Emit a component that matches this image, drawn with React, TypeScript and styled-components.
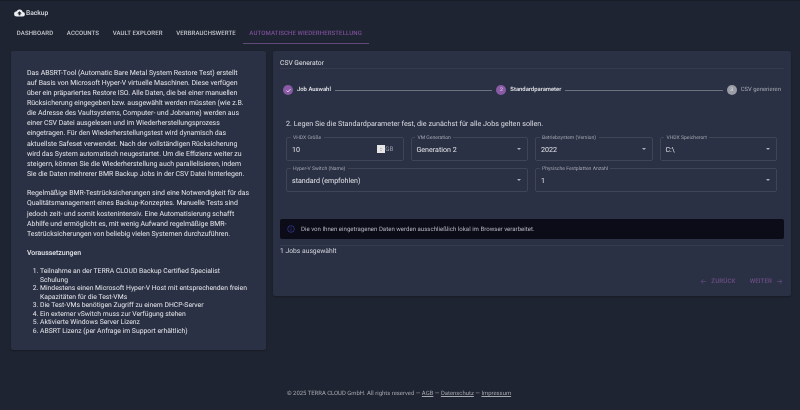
import React from "react";
import styled, { createGlobalStyle } from "styled-components";

const Global = createGlobalStyle`
  html, body { margin: 0; padding: 0; background: #1e2431; }
  body { font-family: Roboto, "Liberation Sans", sans-serif; color: #e4e5ea; text-rendering: geometricPrecision; }
  * { box-sizing: border-box; }
`;
const Page = styled.div`
  width: 800px; height: 410px; display: flex; flex-direction: column; overflow: hidden; background: #1e2431; filter: blur(0.3px);
`;
const AppBar = styled.header`
  flex: none; height: 24px; display: flex; align-items: center; gap: 1.5px; padding: 0 13.5px; font-size: 6.7px; font-weight: 500; color: #d8dae0;
  border-top: 1px solid #181d28;
`;
const Tabs = styled.nav`
  flex: none; display: flex; height: 20px; padding-left: 10px;
`;
const Tab = styled.div<{ $active?: boolean }>`
  padding: 0 6.8px; display: flex; align-items: center; font-size: 6.05px; font-weight: 500; letter-spacing: 0.1px; text-transform: uppercase;
  color: ${(p) => (p.$active ? "#7d4f99" : "#c6c8cf")};
  border-bottom: 1px solid ${(p) => (p.$active ? "#5f4a78" : "transparent")};
`;
const Main = styled.main`
  flex: none; display: grid; grid-template-columns: 255px 518px; gap: 7px; padding: 7px 0 0 11px; align-items: start;
`;
const InfoCard = styled.section`
  height: 299px; background: #2b3144; border-radius: 2px; padding: 16.5px 16px 0; font-size: 6.95px; line-height: 10.15px; color: #e4e5ea;
  box-shadow: 0 1px 2px rgba(0,0,0,.25);
`;
const Para = styled.p`
  margin: 0 0 9px; white-space: pre-line;
`;
const Heading = styled.div`
  font-weight: 500; margin: 0 0 9px;
`;
const Ol = styled.ol`
  margin: 0; padding: 0 1.5px 0 13px; font-size: 6.8px; line-height: 8.5px;
`;
const CsvCard = styled.section`
  height: 245px; background: #2b3144; border-radius: 2px; padding: 0 7px; display: flex; flex-direction: column;
  box-shadow: 0 1px 2px rgba(0,0,0,.25);
`;
const CardTitle = styled.div`
  flex: none; height: 18px; padding-top: 7px; line-height: 10px; border-bottom: 1px solid #353b4e; font-size: 6.75px; color: #e0e1e6;
`;
const Stepper = styled.div`
  flex: none; display: flex; align-items: center; height: 42px; padding: 0 3px; gap: 4px;
`;
const StepCircle = styled.span<{ $muted?: boolean }>`
  width: 10px; height: 10px; border-radius: 50%; background: ${(p) => (p.$muted ? "#9a9ca6" : "#8a5aa6")}; color: #e8e6ee;
  display: inline-flex; align-items: center; justify-content: center; font-size: 5px; flex: none;
`;
const StepLabel = styled.span<{ $muted?: boolean }>`
  font-size: 5.9px; font-weight: ${(p) => (p.$muted ? 400 : 500)}; color: ${(p) => (p.$muted ? "#a6a8b2" : "#e8e9ee")}; white-space: nowrap;
`;
const StepLine = styled.span`
  flex: 1; height: 1px; background: #6d717e;
`;
const Lead = styled.div`
  flex: none; font-size: 7.2px; color: #dcdde3; margin: 8px 0 0 6px; line-height: 10px;
`;
const Fields = styled.div`
  flex: none; display: grid; grid-template-columns: repeat(4, 117.5px); gap: 7px; margin: 8px 0 0 6px;
`;
const Field = styled.div<{ $wide?: boolean }>`
  position: relative; height: 24px; border: 1px solid #3f4557; border-radius: 2px; display: flex; align-items: center;
  padding: 0 5px; font-size: 7.1px; color: #e4e5ea; justify-content: space-between;
  ${(p) => (p.$wide ? "grid-column: span 2;" : "")}
`;
const Legend = styled.span`
  position: absolute; top: -3.5px; left: 3.5px; padding: 0 2.5px; background: #2b3144; font-size: 5.05px; line-height: 6px; color: #a4a7b1; white-space: nowrap;
`;
const Caret = styled.span`
  width: 0; height: 0; border-left: 2px solid transparent; border-right: 2px solid transparent; border-top: 2px solid #aeb0b9; margin-right: 1px;
`;
const Suffix = styled.span`
  display: inline-flex; align-items: center; font-size: 6.3px; color: #9a9da8; margin-right: 4px;
`;
const Spin = styled.span`
  width: 8px; height: 8px; background: #e6e6e8; display: inline-flex; flex-direction: column; align-items: center; justify-content: center; gap: 1px;
`;
const SpinTri = styled.span<{ $down?: boolean }>`
  width: 0; height: 0; border-left: 1.5px solid transparent; border-right: 1.5px solid transparent;
  ${(p) => (p.$down ? "border-top: 1.5px solid #999;" : "border-bottom: 1.5px solid #999;")}
`;
const Alert = styled.div`
  flex: none; height: 20px; margin-top: 27px; background: #0b0c17; border-radius: 2px; display: flex; align-items: center; gap: 6px; padding-left: 7px; font-size: 6.08px; color: #b4b6c0;
`;
const Divider = styled.div`
  flex: none; height: 1px; background: #353b4e; margin-top: 6px;
`;
const Count = styled.div`
  flex: none; font-size: 6.75px; color: #d4d6dc; line-height: 10px;
`;
const Actions = styled.div`
  margin-top: auto; display: flex; justify-content: flex-end; gap: 14px; height: 30px; align-items: center; padding-right: 1px;
`;
const NavButton = styled.span`
  display: inline-flex; align-items: center; gap: 4px; font-size: 6.2px; font-weight: 500; color: #6c4c84; letter-spacing: .1px;
`;
const Footer = styled.footer`
  flex: none; margin-top: 40px; padding-left: 287px; font-size: 5.92px; color: #a6a8b0; line-height: 8px;
`;
const FootLink = styled.a`
  color: #a6a8b0; text-decoration: underline;
`;

const Arrow = ({ back }: { back?: boolean }) => (
  <svg width="7" height="7" viewBox="0 0 24 24" fill="none" stroke="#6c4c84" strokeWidth="2.4">
    {back ? <path d="M20 12H5M11 5l-7 7 7 7" /> : <path d="M4 12h15M13 5l7 7-7 7" />}
  </svg>
);

export default function App() {
  return (
    <Page>
      <Global />
      <AppBar>
        <svg width="11" height="8" viewBox="0 0 24 18" fill="#eceef2">
          <path d="M19.4 7A7.5 7.5 0 0 0 5.4 5 6 6 0 0 0 6 17h13a5 5 0 0 0 .4-10zM14 10v4h-4v-4H7l5-5 5 5z" fillRule="evenodd" />
        </svg>
        Backup
      </AppBar>
      <Tabs>
        <Tab>Dashboard</Tab>
        <Tab>Accounts</Tab>
        <Tab>Vault Explorer</Tab>
        <Tab>Verbrauchswerte</Tab>
        <Tab $active>Automatische Wiederherstellung</Tab>
      </Tabs>
      <Main>
        <InfoCard>
          <Para>{`Das ABSRT-Tool (Automatic Bare Metal System Restore Test) erstellt
auf Basis von Microsoft Hyper-V virtuelle Maschinen. Diese verfügen
über ein präpariertes Restore ISO. Alle Daten, die bei einer manuellen
Rücksicherung eingegeben bzw. ausgewählt werden müssten (wie z.B.
die Adresse des Vaultsystems, Computer- und Jobname) werden aus
einer CSV Datei ausgelesen und im Wiederherstellungsprozess
eingetragen. Für den Wiederherstellungstest wird dynamisch das
aktuellste Safeset verwendet. Nach der vollständigen Rücksicherung
wird das System automatisch neugestartet. Um die Effizienz weiter zu
steigern, können Sie die Wiederherstellung auch parallelisieren, indem
Sie die Daten mehrerer BMR Backup Jobs in der CSV Datei hinterlegen.`}</Para>
          <Para>{`Regelmäßige BMR-Testrücksicherungen sind eine Notwendigkeit für das
Qualitätsmanagement eines Backup-Konzeptes. Manuelle Tests sind
jedoch zeit- und somit kostenintensiv. Eine Automatisierung schafft
Abhilfe und ermöglicht es, mit wenig Aufwand regelmäßige BMR-
Testrücksicherungen von beliebig vielen Systemen durchzuführen.`}</Para>
          <Heading>Voraussetzungen</Heading>
          <Ol>
            <li>Teilnahme an der TERRA CLOUD Backup Certified Specialist Schulung</li>
            <li>Mindestens einen Microsoft Hyper-V Host mit entsprechenden freien Kapazitäten für die Test-VMs</li>
            <li>Die Test-VMs benötigen Zugriff zu einem DHCP-Server</li>
            <li>Ein externer vSwitch muss zur Verfügung stehen</li>
            <li>Aktivierte Windows Server Lizenz</li>
            <li>ABSRT Lizenz (per Anfrage im Support erhältlich)</li>
          </Ol>
        </InfoCard>
        <CsvCard>
          <CardTitle>CSV Generator</CardTitle>
          <Stepper>
            <StepCircle>
              <svg width="7" height="7" viewBox="0 0 24 24" fill="none" stroke="#e8e6ee" strokeWidth="3"><path d="M5 12l5 5 9-10" /></svg>
            </StepCircle>
            <StepLabel>Job Auswahl</StepLabel>
            <StepLine />
            <StepCircle>2</StepCircle>
            <StepLabel>Standardparameter</StepLabel>
            <StepLine />
            <StepCircle $muted>3</StepCircle>
            <StepLabel $muted>CSV generieren</StepLabel>
          </Stepper>
          <Lead>2. Legen Sie die Standardparameter fest, die zunächst für alle Jobs gelten sollen.</Lead>
          <Fields>
            <Field><Legend>VHDX Größe</Legend>10<Suffix><Spin><SpinTri /><SpinTri $down /></Spin>GB</Suffix></Field>
            <Field><Legend>VM Generation</Legend>Generation 2<Caret /></Field>
            <Field><Legend>Betriebsystem (Version)</Legend>2022<Caret /></Field>
            <Field><Legend>VHDX Speicherort</Legend>C:\<Caret /></Field>
            <Field $wide><Legend>Hyper-V Switch (Name)</Legend>standard (empfohlen)<Caret /></Field>
            <Field $wide><Legend>Physische Festplatten Anzahl</Legend>1<Caret /></Field>
          </Fields>
          <Alert>
            <svg width="8" height="8" viewBox="0 0 24 24" fill="none" stroke="#3d3fa8" strokeWidth="2"><circle cx="12" cy="12" r="10" /><path d="M12 11v6M12 7v1.5" /></svg>
            Die von Ihnen eingetragenen Daten werden ausschließlich lokal im Browser verarbeitet.
          </Alert>
          <Divider />
          <Count>1 Jobs ausgewählt</Count>
          <Actions>
            <NavButton><Arrow back />ZURÜCK</NavButton>
            <NavButton>WEITER<Arrow /></NavButton>
          </Actions>
        </CsvCard>
      </Main>
      <Footer>© 2025 TERRA CLOUD GmbH. All rights reserved — <FootLink>AGB</FootLink> — <FootLink>Datenschutz</FootLink> — <FootLink>Impressum</FootLink></Footer>
    </Page>
  );
}
